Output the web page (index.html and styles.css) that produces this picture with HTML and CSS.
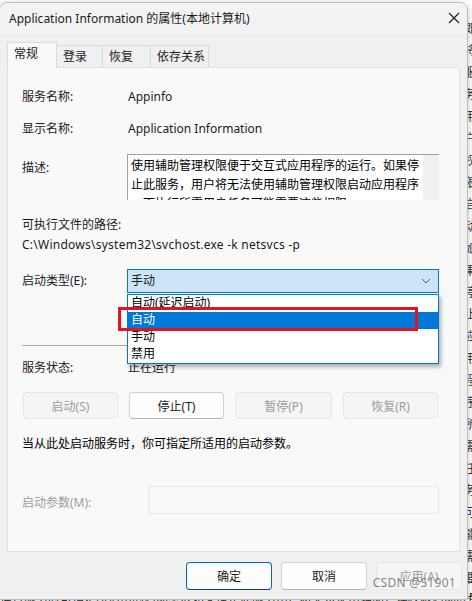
FILE: index.html
```html
<!DOCTYPE html>
<html lang="zh-CN">
<head>
<meta charset="UTF-8" />
<title>Application Information 的属性(本地计算机)</title>
<link rel="stylesheet" href="styles.css">
</head>
<body>

<div class="backdrop">
  <div class="strip">即将服务用户权限启动如果停止应用程序所需任务可能需要这些权限运行交互式辅助管理便于使用描述名称显示类型手动自动禁用状态</div>
  <div class="bottomline">运行服务时可指定所适用的启动参数如果停止此服务用户将无法使用辅助管理权限启动应用程序</div>
</div>

<div class="dialog">
  <div class="titlebar">
    <span class="title">Application Information 的属性(本地计算机)</span>
    <svg class="close" width="12" height="12" viewBox="0 0 12 12">
      <path d="M1 1 L11 11 M11 1 L1 11" stroke="#1a1a1a" stroke-width="1.1" fill="none"/>
    </svg>
  </div>

  <div class="tabs">
    <div class="tab active">常规</div>
    <div class="tab t-login">登录</div>
    <div class="tab t-recover">恢复</div>
    <div class="tab t-deps">依存关系</div>
  </div>

  <div class="panel">
    <div class="row first">
      <span class="label">服务名称:</span>
      <span class="value">Appinfo</span>
    </div>
    <div class="row second">
      <span class="label">显示名称:</span>
      <span class="value">Application Information</span>
    </div>
    <div class="row desc-row">
      <span class="label desc-label">描述:</span>
      <div class="desc-box">
        <div class="desc-text">使用辅助管理权限便于交互式应用程序的运行。如果停<br>止此服务，用户将无法使用辅助管理权限启动应用程序<br>，而执行所需用户任务可能需要这些权限。</div>
        <div class="scrollbar"></div>
      </div>
    </div>

    <div class="path-label">可执行文件的路径:</div>
    <div class="path">C:\Windows\system32\svchost.exe -k netsvcs -p</div>

    <div class="row combo-row">
      <span class="label">启动类型(E):</span>
      <div class="combo">
        <span>手动</span>
        <svg class="chevron" width="10" height="6" viewBox="0 0 10 6">
          <path d="M1 1 L5 5 L9 1" stroke="#5a5a5a" stroke-width="1" fill="none"/>
        </svg>
        <div class="dropdown">
          <div class="item">自动(延迟启动)</div>
          <div class="item selected">自动</div>
          <div class="item">手动</div>
          <div class="item">禁用</div>
        </div>
        <div class="mark"></div>
      </div>
    </div>

    <div class="separator"></div>

    <div class="row status-row">
      <span class="label">服务状态:</span>
      <span class="value">正在运行</span>
    </div>

    <div class="svc-buttons">
      <button class="btn disabled">启动(S)</button>
      <button class="btn">停止(T)</button>
      <button class="btn disabled wide">暂停(P)</button>
      <button class="btn disabled">恢复(R)</button>
    </div>

    <div class="note">当从此处启动服务时，你可指定所适用的启动参数。</div>

    <div class="params-row">
      <span class="label muted">启动参数(M):</span>
      <div class="params-input"></div>
    </div>
  </div>

  <div class="footer">
    <button class="btn big primary">确定</button>
    <button class="btn big">取消</button>
    <button class="btn big disabled">应用(A)</button>
  </div>

  <div class="watermark">CSDN @S1901</div>
</div>

</body>
</html>
```

FILE: styles.css
```css
body {
  margin: 0;
  width: 472px;
  height: 601px;
  overflow: hidden;
  background: #ffffff;
  font-family: "Noto Sans", "Noto Sans CJK SC", sans-serif;
  font-size: 12px;
  color: #1b1b1b;
  position: relative;
}

/* window behind the dialog */
.backdrop {
  height: 601px;
  display: flex;
  flex-direction: column;
  color: #333333;
  font-size: 12px;
}
.strip {
  flex: 1;
  align-self: flex-end;
  width: 13px;
  margin-right: -5px;
  line-height: 22px;
  word-break: break-all;
  overflow: hidden;
  padding-top: 18px;
}
.bottomline {
  height: 12px;
  line-height: 20px;
  white-space: nowrap;
  overflow: hidden;
  margin-top: -10px;
}

.dialog {
  position: absolute;
  top: 2px;
  left: -1px;
  width: 467px;
  height: 596px;
  background: #f0f0f0;
  border: 1px solid #bcbcbc;
  border-radius: 8px 8px 0 0;
  box-shadow: 0 2px 10px rgba(0, 0, 0, 0.2);
  overflow: hidden;
}

.titlebar {
  height: 30px;
  display: flex;
  align-items: center;
  justify-content: space-between;
  padding: 0 7px 0 9px;
  background: #f3f3f3;
}
.title {
  font-size: 12px;
  color: #1a1a1a;
}

.tabs {
  display: flex;
  align-items: flex-end;
  margin: 9px 0 0 7px;
  height: 25px;
  position: relative;
  z-index: 1;
}
.tab {
  box-sizing: border-box;
  height: 22px;
  line-height: 21px;
  padding-left: 6px;
  background: #f0f0f0;
  border: 1px solid #dadada;
  border-bottom: none;
  margin-left: -1px;
  font-size: 12px;
}
.tab.active {
  height: 26px;
  line-height: 22px;
  width: 50px;
  margin-left: 0;
  background: #f9f9f9;
  margin-bottom: -1px;
}
.t-login { width: 47px; }
.t-recover { width: 49px; }
.t-deps { width: 59px; }

.panel {
  box-sizing: border-box;
  margin: 0 7px;
  height: 485px;
  background: #f9f9f9;
  border: 1px solid #e1e1e1;
  padding: 0 20px 0 14px;
  position: relative;
}

.row {
  display: grid;
  grid-template-columns: 105px 1fr;
  align-items: center;
  height: 20px;
  line-height: 20px;
}
.row.first { margin-top: 19px; }
.row.second { margin-top: 12px; }
.value { padding-left: 1px; }

.desc-row {
  margin-top: 15px;
  height: 46px;
  align-items: start;
}
.desc-label { padding-top: 4px; }
.desc-box {
  height: 46px;
  box-sizing: border-box;
  border-top: 1px solid #a0a0a0;
  border-left: 1px solid #a0a0a0;
  background: #ffffff;
  display: flex;
  overflow: hidden;
}
.desc-text {
  flex: 1;
  padding: 1px 0 0 3px;
  line-height: 19px;
  color: #000;
  white-space: nowrap;
  overflow: hidden;
}
.scrollbar {
  width: 16px;
  background: #f0f0f0;
}

.path-label {
  margin-top: 15px;
  line-height: 20px;
}
.path {
  line-height: 20px;
  letter-spacing: 0.25px;
}

.combo-row {
  margin-top: 14px;
  height: 24px;
}
.combo {
  position: relative;
  box-sizing: border-box;
  height: 24px;
  background: #cce4f7;
  border: 1px solid #0078d4;
  display: flex;
  align-items: center;
  justify-content: space-between;
  padding: 0 7px 0 3px;
  z-index: 2;
}
.dropdown {
  position: absolute;
  top: 24px;
  left: -1px;
  width: 312px;
  box-sizing: border-box;
  background: #ffffff;
  border: 1px solid #0078d4;
  box-shadow: 2px 3px 4px rgba(0, 0, 0, 0.3);
}
.item {
  height: 17px;
  line-height: 16px;
  padding-left: 3px;
  color: #000;
}
.item.selected {
  background: #0078d7;
  color: #ffffff;
}
.mark {
  position: absolute;
  left: -10px;
  top: 37px;
  width: 294px;
  height: 18px;
  border: 3px solid #e3141f;
}

.separator {
  margin-top: 52px;
  height: 1px;
  background: #a8a8a8;
}

.status-row { margin-top: 12px; }

.svc-buttons {
  display: flex;
  justify-content: space-between;
  margin: 14px 1px 0 1px;
}
.btn {
  box-sizing: border-box;
  width: 95px;
  height: 27px;
  font-family: inherit;
  font-size: 12px;
  color: #1b1b1b;
  background: #fdfdfd;
  border: 1px solid #d0d0d0;
  border-bottom-color: #b5b5b5;
  border-radius: 4px;
  padding: 0;
}
.btn.wide { width: 97px; }
.btn.disabled {
  background: #f5f5f5;
  border-color: #e5e5e5;
  color: #9d9d9d;
}

.note {
  margin-top: 15px;
  line-height: 20px;
  color: #000;
}

.params-row {
  display: grid;
  grid-template-columns: 126px 1fr;
  align-items: center;
  margin-top: 32px;
}
.muted { color: #9d9d9d; padding-top: 4px; }
.params-input {
  height: 28px;
  box-sizing: border-box;
  background: #f9f9f9;
  border: 1px solid #e8e8e8;
  border-radius: 2px;
}

.footer {
  display: flex;
  justify-content: flex-end;
  gap: 9px;
  margin-top: 10px;
  padding-right: 5px;
}
.btn.big {
  width: 86px;
  height: 28px;
}
.btn.primary {
  border: 1px solid #0067c0;
  border-bottom-color: #003e92;
}

.watermark {
  position: absolute;
  right: 11px;
  top: 572px;
  line-height: 16px;
  font-size: 12px;
  color: rgba(90, 90, 90, 0.75);
  letter-spacing: 0.3px;
}
```
